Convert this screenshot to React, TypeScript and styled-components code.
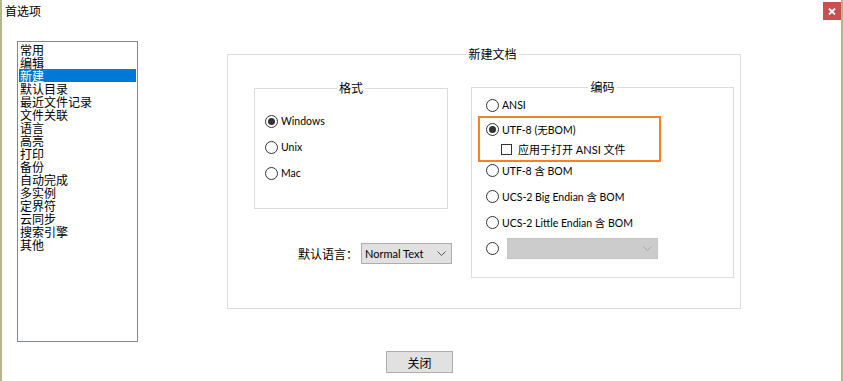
import * as React from "react";
import styled, { createGlobalStyle } from "styled-components";

const GlobalStyle = createGlobalStyle`
  html, body {
    margin: 0;
    padding: 0;
    background: #ffffff;
  }
  body {
    font-family: "Noto Sans CJK SC", sans-serif;
    font-size: 12px;
    color: #000000;
  }
`;

const latin = `Lato, "Noto Sans CJK SC", sans-serif`;

const Window = styled.div`
  width: 843px;
  height: 381px;
  box-sizing: border-box;
  border-left: 2px solid #b6b68e;
  border-right: 2px solid #b6b68e;
  background: #ffffff;
  display: flex;
  flex-direction: column;
  overflow: hidden;
`;

const TitleBar = styled.div`
  height: 22px;
  display: flex;
  align-items: flex-start;
  justify-content: space-between;
`;

const Title = styled.div`
  padding: 4px 0 0 3px;
  line-height: 14px;
  font-size: 12px;
`;

const CloseBox = styled.div`
  width: 18px;
  height: 18px;
  margin-top: 2px;
  background: #c75050;
  display: flex;
  align-items: center;
  justify-content: center;
`;

const Body = styled.div`
  display: flex;
  align-items: flex-start;
`;

const ListBox = styled.div`
  margin: 19px 0 0 15px;
  width: 121px;
  height: 301px;
  box-sizing: border-box;
  border: 1px solid #828790;
  padding: 1px;
  display: flex;
  flex-direction: column;
`;

const ListItem = styled.div<{ $selected?: boolean }>`
  height: 13px;
  line-height: 13px;
  padding-left: 1px;
  font-size: 12px;
  white-space: nowrap;
  background: ${(p) => (p.$selected ? "#0078d7" : "transparent")};
  color: ${(p) => (p.$selected ? "#ffffff" : "#000000")};
`;

const RightColumn = styled.div`
  margin: 32px 0 0 89px;
  display: flex;
  flex-direction: column;
  align-items: flex-start;
`;

const Group = styled.div<{ $w: number; $h: number }>`
  width: ${(p) => p.$w}px;
  height: ${(p) => p.$h}px;
  box-sizing: border-box;
  border: 1px solid #dcdcdc;
  display: flex;
  flex-direction: column;
  flex-shrink: 0;
`;

const Legend = styled.div<{ $shift?: number }>`
  align-self: center;
  margin-top: -8px;
  margin-left: ${(p) => p.$shift ?? 0}px;
  padding: 0 2px;
  background: #ffffff;
  line-height: 14px;
  font-size: 12px;
`;

const OuterContent = styled.div`
  display: flex;
  align-items: flex-start;
  padding-left: 26px;
  gap: 23px;
`;

const LeftColumn = styled.div`
  margin-top: 27px;
  width: 194px;
  display: flex;
  flex-direction: column;
`;

const RightGroupSlot = styled.div`
  margin-top: 26px;
`;

const Options = styled.div<{ $top: number; $left: number }>`
  margin-top: ${(p) => p.$top}px;
  padding-left: ${(p) => p.$left}px;
  display: flex;
  flex-direction: column;
`;

const OptionRow = styled.div<{ $h: number; $indent?: number }>`
  height: ${(p) => p.$h}px;
  padding-left: ${(p) => p.$indent ?? 0}px;
  display: flex;
  align-items: center;
  gap: 3px;
  font-family: ${latin};
  font-size: 10.5px;
  white-space: nowrap;
`;

const RadioCircle = styled.span<{ $checked?: boolean }>`
  width: 13px;
  height: 13px;
  box-sizing: border-box;
  border: 1px solid #333333;
  border-radius: 50%;
  display: inline-flex;
  align-items: center;
  justify-content: center;
  flex-shrink: 0;
  &::after {
    content: "";
    width: 7px;
    height: 7px;
    border-radius: 50%;
    background: ${(p) => (p.$checked ? "#333333" : "transparent")};
  }
`;

const CheckBox = styled.span`
  width: 11px;
  height: 11px;
  box-sizing: border-box;
  border: 1px solid #333333;
  margin-right: 3px;
  flex-shrink: 0;
`;

const CheckLabel = styled.span`
  font-size: 11px;
`;

const Highlight = styled.div`
  width: 183px;
  height: 46px;
  box-sizing: border-box;
  border: 2px solid #f5821f;
  padding: 1px 0 1px 6px;
  margin-bottom: -5px;
  display: flex;
  flex-direction: column;
`;

const Combo = styled.div<{ $w: number; $disabled?: boolean }>`
  width: ${(p) => p.$w}px;
  height: 21px;
  box-sizing: border-box;
  border: 1px solid ${(p) => (p.$disabled ? "#c4c4c4" : "#adadad")};
  background: ${(p) => (p.$disabled ? "#cccccc" : "#e1e1e1")};
  display: flex;
  align-items: center;
  justify-content: space-between;
  padding: 0 5px 0 3px;
  font-family: ${latin};
  font-size: 11px;
  color: #000000;
`;

const LangRow = styled.div`
  margin-top: 34px;
  margin-right: -4px;
  display: flex;
  align-items: center;
  justify-content: flex-end;
  gap: 3px;
  font-size: 12px;
`;

const EncodingOptions = styled.div`
  padding-left: 6px;
  display: flex;
  flex-direction: column;
`;

const ComboGap = styled.span`
  width: 2px;
`;

const CloseButton = styled.button`
  margin: 42px 0 0 159px;
  width: 67px;
  height: 22px;
  box-sizing: border-box;
  border: 1px solid #adadad;
  background: #e1e1e1;
  font-family: "Noto Sans CJK SC", sans-serif;
  font-size: 12px;
  padding: 0;
  color: #000000;
`;

const Chevron = ({ color }: { color: string }) => (
  <svg width="9" height="5" viewBox="0 0 9 5">
    <path d="M0.5 0.5L4.5 4.5L8.5 0.5" fill="none" stroke={color} strokeWidth="1" />
  </svg>
);

const Radio = ({ label, checked, h, indent }: { label?: string; checked?: boolean; h: number; indent?: number }) => (
  <OptionRow $h={h} $indent={indent}>
    <RadioCircle $checked={checked} />
    {label && <span>{label}</span>}
  </OptionRow>
);

const pages = [
  "常用", "编辑", "新建", "默认目录", "最近文件记录", "文件关联", "语言", "高亮",
  "打印", "备份", "自动完成", "多实例", "定界符", "云同步", "搜索引擎", "其他",
];

const App = (): JSX.Element => {
  return (
    <Window>
      <GlobalStyle />
      <TitleBar>
        <Title>首选项</Title>
        <CloseBox>
          <svg width="8" height="7" viewBox="0 0 8 7">
            <path d="M1 0.5L7 6.5M7 0.5L1 6.5" stroke="#ffffff" strokeWidth="1.8" />
          </svg>
        </CloseBox>
      </TitleBar>
      <Body>
        <ListBox>
          {pages.map((p) => (
            <ListItem key={p} $selected={p === "新建"}>{p}</ListItem>
          ))}
        </ListBox>
        <RightColumn>
          <Group $w={514} $h={255}>
            <Legend $shift={17}>新建文档</Legend>
            <OuterContent>
              <LeftColumn>
                <Group $w={194} $h={121}>
                  <Legend>格式</Legend>
                  <Options $top={13} $left={10}>
                    <Radio h={26} label="Windows" checked />
                    <Radio h={26} label="Unix" />
                    <Radio h={26} label="Mac" />
                  </Options>
                </Group>
                <LangRow>
                  <span>默认语言：</span>
                  <Combo $w={91}>
                    <span>Normal Text</span>
                    <Chevron color="#555555" />
                  </Combo>
                </LangRow>
              </LeftColumn>
              <RightGroupSlot>
                <Group $w={263} $h={191}>
                  <Legend>编码</Legend>
                  <EncodingOptions>
                    <Radio h={22} indent={8} label="ANSI" />
                    <Highlight>
                      <Radio h={20} label="UTF-8 (无BOM)" checked />
                      <OptionRow $h={20} $indent={15}>
                        <CheckBox />
                        <CheckLabel>应用于打开 ANSI 文件</CheckLabel>
                      </OptionRow>
                    </Highlight>
                    <Radio h={26} indent={8} label="UTF-8 含 BOM" />
                    <Radio h={26} indent={8} label="UCS-2 Big Endian 含 BOM" />
                    <Radio h={26} indent={8} label="UCS-2 Little Endian 含 BOM" />
                    <OptionRow $h={26} $indent={8}>
                      <RadioCircle />
                      <ComboGap />
                      <Combo $w={151} $disabled>
                        <span />
                        <Chevron color="#a6a6a6" />
                      </Combo>
                    </OptionRow>
                  </EncodingOptions>
                </Group>
              </RightGroupSlot>
            </OuterContent>
          </Group>
          <CloseButton>关闭</CloseButton>
        </RightColumn>
      </Body>
    </Window>
  );
};

export default App;
